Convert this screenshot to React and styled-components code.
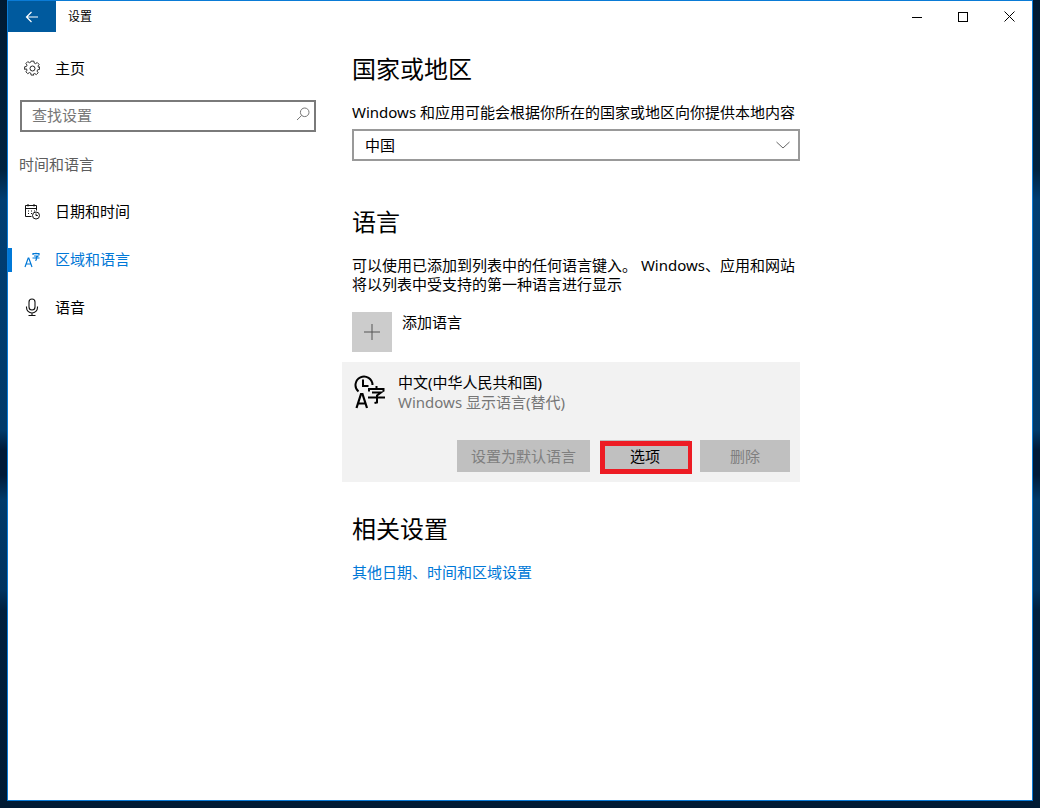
import React from 'react';
import styled, { createGlobalStyle } from 'styled-components';

const GlobalStyle = createGlobalStyle`
  html, body {
    margin: 0;
    padding: 0;
    width: 1040px;
    height: 808px;
    overflow: hidden;
    font-family: 'Noto Sans', 'Noto Sans CJK SC', sans-serif;
  }
  *, *::before, *::after { box-sizing: border-box; }
`;

const Desktop = styled.div`
  width: 1040px;
  height: 808px;
  padding: 0 7px 7px 7px;
  background: linear-gradient(
    180deg,
    #001a33 0,
    #00233f 170px,
    #003e72 200px,
    #003a6a 430px,
    #001a38 450px,
    #001a38 475px,
    #003a6a 500px,
    #00335f 590px,
    #00203e 610px,
    #001a33 808px
  );
`;

const Window = styled.div`
  width: 1026px;
  height: 801px;
  background: #fff;
  border: 1px solid #0a7bd6;
  display: flex;
  flex-direction: column;
`;

const TitleBar = styled.div`
  height: 31px;
  display: flex;
  align-items: center;
  flex: none;
`;

const BackButton = styled.div`
  width: 48px;
  height: 31px;
  background: #005a9e;
  display: flex;
  align-items: center;
  justify-content: center;
  color: #fff;
`;

const WindowTitle = styled.div`
  margin-left: 12px;
  flex: 1;
  font-size: 12px;
  color: #000;
  position: relative;
  top: -1px;
`;

const WindowControl = styled.div`
  width: 46px;
  height: 31px;
  display: flex;
  align-items: center;
  justify-content: center;
`;

const Body = styled.div`
  flex: 1;
  display: flex;
`;

const Sidebar = styled.nav`
  width: 344px;
  flex: none;
  padding-top: 12px;
`;

const NavRow = styled.div`
  height: 48px;
  display: flex;
  align-items: center;
  position: relative;
  padding: 0 0 2px 15px;
  font-size: 15px;
  color: ${(props) => (props.$active ? '#0078d7' : '#000')};
  ${(props) =>
    props.$active &&
    `&::before {
      content: '';
      position: absolute;
      left: 0;
      top: 13px;
      width: 4px;
      height: 24px;
      background: #0078d7;
    }`}
`;

const NavIcon = styled.span`
  width: 18px;
  height: 18px;
  margin: 2px 14px 0 0;
  display: flex;
  align-items: center;
  justify-content: center;
`;

const SearchBox = styled.div`
  margin: 8px 0 0 12px;
  width: 296px;
  height: 32px;
  border: 2px solid #7a7a7a;
  display: flex;
  align-items: center;
  justify-content: space-between;
  padding: 0 4px 4px 10px;
  font-size: 15px;
  color: #767676;
`;

const GroupLabel = styled.div`
  margin: 22px 0 13px 11px;
  height: 20px;
  line-height: 20px;
  font-size: 15px;
  color: #5d5d5d;
`;

const Main = styled.main`
  width: 448px;
  padding-top: 19px;
`;

const Heading = styled.h2`
  margin: ${(props) => props.$top || 0}px 0 0 0;
  height: 36px;
  line-height: 36px;
  font-size: 24px;
  font-weight: 400;
  color: #000;
`;

const Copy = styled.p`
  margin: ${(props) => props.$top || 0}px 0 0 0;
  line-height: 19px;
  font-size: 15px;
  color: #000;
  white-space: nowrap;
`;

const Select = styled.div`
  margin-top: 7px;
  width: 448px;
  height: 32px;
  border: 2px solid #999;
  padding: 0 8px 1px 11px;
  display: flex;
  align-items: center;
  justify-content: space-between;
  font-size: 15px;
  color: #000;
`;

const AddRow = styled.div`
  margin-top: 18px;
  display: flex;
  gap: 10px;
  font-size: 15px;
  line-height: 20px;
  color: #000;
`;

const AddTile = styled.div`
  width: 40px;
  height: 40px;
  background: #cccccc;
  display: flex;
  align-items: center;
  justify-content: center;
`;

const LangCard = styled.div`
  margin: 10px 0 0 -10px;
  width: 458px;
  height: 120px;
  background: #f2f2f2;
  padding: 10px 10px 10px 12px;
  display: flex;
  flex-direction: column;
  justify-content: space-between;
`;

const LangInfo = styled.div`
  display: flex;
  gap: 12px;
`;

const LangText = styled.div`
  font-size: 15px;
  line-height: 20px;
  color: #000;
`;

const LangSub = styled.div`
  color: #767676;
`;

const ButtonRow = styled.div`
  display: flex;
  justify-content: flex-end;
  gap: 10px;
`;

const Button = styled.div`
  position: relative;
  width: ${(props) => props.$width}px;
  height: 32px;
  padding-bottom: 2px;
  background: #c0c0c0;
  display: flex;
  align-items: center;
  justify-content: center;
  font-size: 15px;
  color: ${(props) => (props.$disabled ? '#7f7f7f' : '#000')};
  ${(props) =>
    props.$marked &&
    `&::after {
      content: '';
      position: absolute;
      left: 0;
      top: 1px;
      width: 92px;
      height: 33px;
      border: 5px solid #ed1c24;
      border-right-width: 4px;
    }`}
`;

const LinkText = styled.a`
  display: block;
  margin-top: 15px;
  line-height: 20px;
  font-size: 15px;
  color: #0078d7;
`;

const Gear = () => (
  <svg width="17" height="17" viewBox="0 0 17 17" fill="none" stroke="#222" strokeWidth="1">
    <circle cx="8.5" cy="8.5" r="2.5" />
    <path d="M7 1h3l.4 2.100 1.400.6 1.800-1.200 2 2-1.200 1.800.6 1.400L16 7.100v2.800l-2 .4-.6 1.400 1.200 1.800-2 2-1.800-1.200-1.400.6L10 16H7l-.4-2.100-1.400-.6-1.800 1.200-2-2 1.200-1.800-.6-1.400L0 9.900V7.100l2-.4.6-1.400L1.400 3.500l2-2 1.800 1.200 1.400-.6z" transform="translate(.6 .2) scale(.93)" />
  </svg>
);

const SearchGlyph = () => (
  <svg width="14" height="14" viewBox="0 0 14 14" fill="none" stroke="#767676" strokeWidth="1">
    <circle cx="8.7" cy="5.3" r="4.3" />
    <path d="M5.700 8.400 1 13" />
  </svg>
);

const CalendarClock = () => (
  <svg width="17" height="17" viewBox="0 0 17 17" fill="none" stroke="#111" strokeWidth="1">
    <path d="M7.500 13.500H1.500V2.500h11v5M1.500 5.500h11M4 1v2.500M10 1v2.500" />
    <path d="M4 8h1M7 8h1M10 8h1M4 10.500h1M7 10.500h1" />
    <circle cx="12" cy="12.500" r="3.500" />
    <path d="M12 10.500v2h1.800" />
  </svg>
);

const LangGlyph = ({ color }) => (
  <svg width="18" height="18" viewBox="0 0 18 18" fill="none" stroke={color} strokeWidth="1.2">
    <path d="M2 17 5.200 8h.6L9 17M3.200 14h4.600" />
    <path d="M10 5V3.700h6V5M13 2.700v1M11 6h4l-1.700 1.300v2.700l-1 .5M9.500 8h7" />
  </svg>
);

const MicGlyph = () => (
  <svg width="14" height="18" viewBox="0 0 14 18" fill="none" stroke="#111" strokeWidth="1.1">
    <rect x="4" y="1" width="6" height="11" rx="3" />
    <path d="M1.500 8.500v1a5.500 5.500 0 0 0 11 0v-1M7 15v2.500M3.500 17.500h7" />
  </svg>
);

const LargeLangGlyph = () => (
  <svg width="32" height="37" viewBox="0 0 32 37" fill="none" stroke="#000" strokeWidth="2.200">
    <path d="M4.500 19.500a8.500 8.500 0 1 1 14-6.500" strokeWidth="2" />
    <path d="M9 7.500v6.500h5.500" strokeWidth="2" />
    <path d="M2.500 36 7 22h1.500L13 36M4 31.500h8" />
    <path d="M15 19.500v-2.500h14.500v2.500M22.500 14v3M18 20.500h9l-4 3v7l-2.500.5M14 25.500h17" strokeWidth="2" />
  </svg>
);

const Chevron = () => (
  <svg width="14" height="8" viewBox="0 0 14 8" fill="none" stroke="#666" strokeWidth="1">
    <path d="M.5 1 7 7l6.500-6" />
  </svg>
);

const App = () => {
  return (
    <Desktop>
      <GlobalStyle />
      <Window>
        <TitleBar>
          <BackButton>
            <svg width="14" height="12" viewBox="0 0 14 12" fill="none" stroke="#fff" strokeWidth="1.2">
              <path d="M13 6H1.500M6.500 1 1.500 6l5 5" />
            </svg>
          </BackButton>
          <WindowTitle>设置</WindowTitle>
          <WindowControl>
            <svg width="10" height="10" viewBox="0 0 10 10" stroke="#000" strokeWidth="1">
              <path d="M0 5.500h10" />
            </svg>
          </WindowControl>
          <WindowControl>
            <svg width="10" height="10" viewBox="0 0 10 10" fill="none" stroke="#000" strokeWidth="1">
              <rect x=".5" y=".5" width="9" height="9" />
            </svg>
          </WindowControl>
          <WindowControl>
            <svg width="11" height="11" viewBox="0 0 11 11" stroke="#000" strokeWidth="1">
              <path d="M.5.5l10 10M10.500.5l-10 10" />
            </svg>
          </WindowControl>
        </TitleBar>
        <Body>
          <Sidebar>
            <NavRow>
              <NavIcon>
                <Gear />
              </NavIcon>
              主页
            </NavRow>
            <SearchBox>
              查找设置
              <SearchGlyph />
            </SearchBox>
            <GroupLabel>时间和语言</GroupLabel>
            <NavRow>
              <NavIcon>
                <CalendarClock />
              </NavIcon>
              日期和时间
            </NavRow>
            <NavRow $active>
              <NavIcon>
                <LangGlyph color="#0078d7" />
              </NavIcon>
              区域和语言
            </NavRow>
            <NavRow>
              <NavIcon>
                <MicGlyph />
              </NavIcon>
              语音
            </NavRow>
          </Sidebar>
          <Main>
            <Heading>国家或地区</Heading>
            <Copy $top={16}>Windows 和应用可能会根据你所在的国家或地区向你提供本地内容</Copy>
            <Select>
              中国
              <Chevron />
            </Select>
            <Heading $top={43}>语言</Heading>
            <Copy $top={16}>
              可以使用已添加到列表中的任何语言键入。 Windows、应用和网站
              <br />
              将以列表中受支持的第一种语言进行显示
            </Copy>
            <AddRow>
              <AddTile>
                <svg width="16" height="16" viewBox="0 0 16 16" stroke="#555" strokeWidth="1">
                  <path d="M8 0v16M0 8h16" />
                </svg>
              </AddTile>
              添加语言
            </AddRow>
            <LangCard>
              <LangInfo>
                <LargeLangGlyph />
                <LangText>
                  中文(中华人民共和国)
                  <LangSub>Windows 显示语言(替代)</LangSub>
                </LangText>
              </LangInfo>
              <ButtonRow>
                <Button $width={133} $disabled>
                  设置为默认语言
                </Button>
                <Button $width={90} $marked>
                  选项
                </Button>
                <Button $width={90} $disabled>
                  删除
                </Button>
              </ButtonRow>
            </LangCard>
            <Heading $top={29}>相关设置</Heading>
            <LinkText>其他日期、时间和区域设置</LinkText>
          </Main>
        </Body>
      </Window>
    </Desktop>
  );
};

export default App;
